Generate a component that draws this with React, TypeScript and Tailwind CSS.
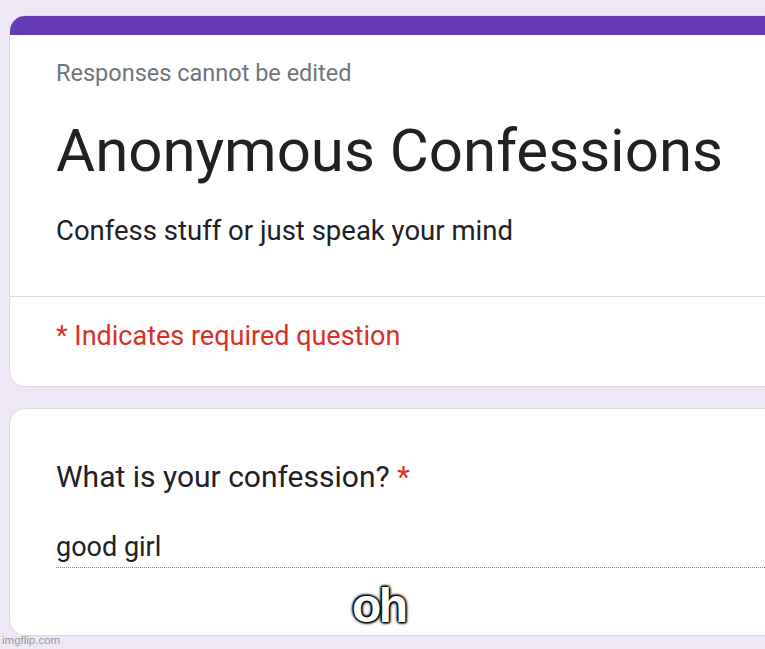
export default function App() {
  return (
    <div className="relative h-[649px] w-[765px] overflow-hidden bg-[#ede7f6] font-['Roboto',sans-serif]">
      <div className="flex w-[800px] flex-col gap-[21px] pl-[9px] pt-[15px]">
        {/* header card */}
        <section className="overflow-hidden rounded-[16px] border border-[#dadce0] bg-white">
          <div className="h-[19px] bg-[#673ab7]" />
          <div className="pl-[46px] pt-[22px] pb-[47px]">
            <p className="text-[23.5px] leading-[32px] text-[#70757a]">Responses cannot be edited</p>
            <h1 className="mt-[27px] text-[60px] leading-[70px] text-[#202124]">Anonymous Confessions</h1>
            <p className="mt-[27px] text-[27.5px] leading-[36px] text-[#202124]">
              Confess stuff or just speak your mind
            </p>
          </div>
          <div className="border-t border-[#dadce0] pl-[46px] pt-[23px] pb-[34px]">
            <p className="text-[27px] leading-[32px] text-[#d93025]">* Indicates required question</p>
          </div>
        </section>

        {/* question card */}
        <section className="relative h-[228px] rounded-[16px] border border-[#dadce0] bg-white pl-[46px] pt-[50px]">
          <p className="text-[30px] leading-[36px] text-[#202124]">
            What is your confession? <span className="text-[#d93025]">*</span>
          </p>
          <div className="mt-[36px] border-b border-dotted border-[#80868b] pb-[4px]">
            <p className="text-[27px] leading-[32px] text-[#202124]">good girl</p>
          </div>
        </section>
      </div>

      {/* meme caption */}
      <span className="absolute left-[352px] top-[582px] font-['Liberation_Sans',sans-serif] text-[48px] font-bold leading-none tracking-[-2.5px] text-white [text-shadow:0_0_2px_#000,0_0_2px_#000,0_0_3px_#000,0_0_3px_#000,0_0_4px_#000,1px_1px_2px_#000,-1px_-1px_2px_#000]">
        oh
      </span>

      <span className="absolute bottom-[3px] left-[2px] font-['Liberation_Sans',sans-serif] text-[11.5px] leading-none text-[#9a9a9a]">
        imgflip.com
      </span>
    </div>
  );
}
